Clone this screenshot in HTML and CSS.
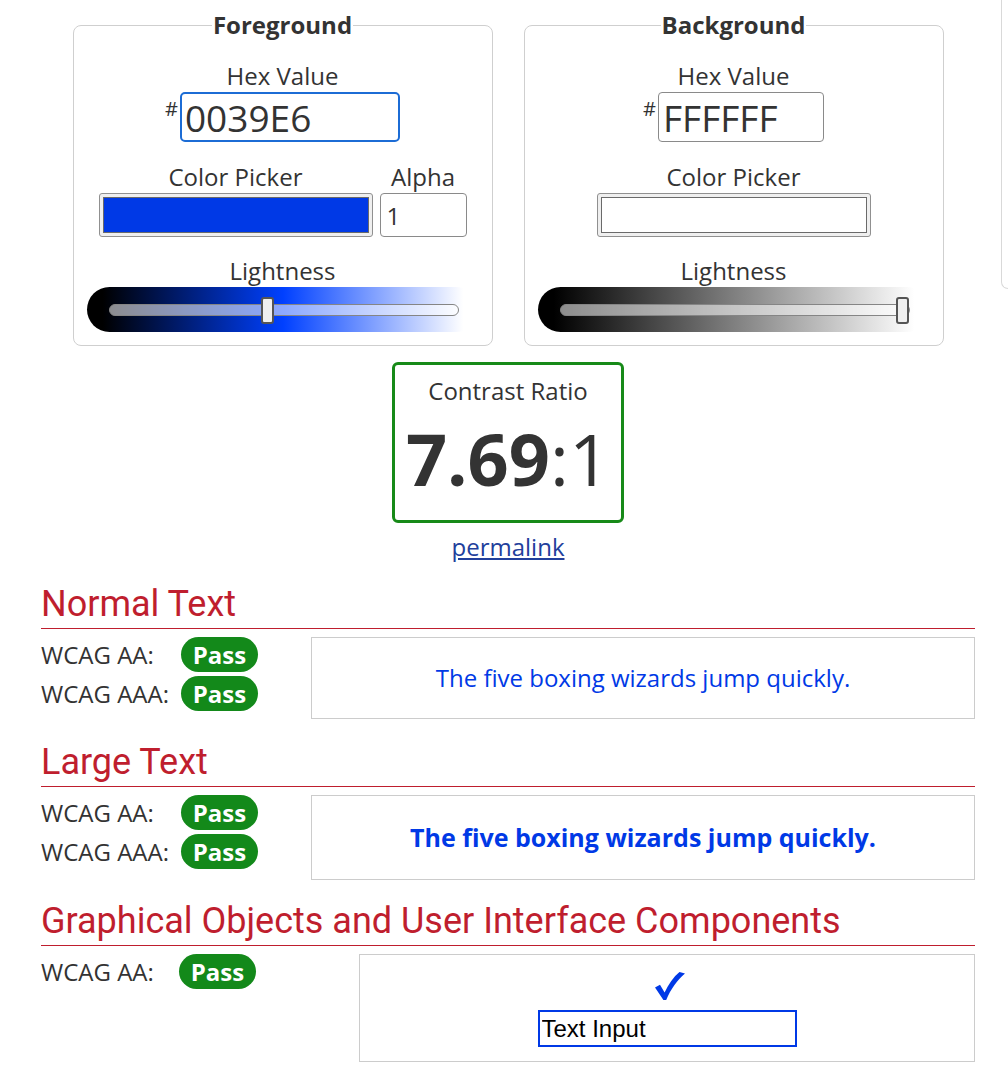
FILE: index.html
```html
<!DOCTYPE html>
<html lang="en">
<head>
<meta charset="utf-8">
<title>Contrast Checker</title>
<link rel="stylesheet" href="styles.css">
</head>
<body>
<main class="page">
  <div class="panels">
    <fieldset class="panel">
      <legend class="panel-title">Foreground</legend>
      <label class="field-label">Hex Value</label>
      <div class="hex-row">
        <span class="hash">#</span>
        <input class="hex-input hex-input--focus" type="text" value="0039E6">
      </div>
      <div class="picker-row">
        <div class="picker-col">
          <label class="field-label">Color Picker</label>
          <div class="swatch"><span class="swatch-fill swatch-fill--blue"></span></div>
        </div>
        <div class="picker-col">
          <label class="field-label">Alpha</label>
          <input class="alpha-input" type="text" value="1">
        </div>
      </div>
      <label class="field-label field-label--light">Lightness</label>
      <div class="slider slider--blue">
        <div class="track">
          <span class="thumb" style="left: calc((100% - 13px) * 0.451)"></span>
        </div>
      </div>
    </fieldset>
    <fieldset class="panel">
      <legend class="panel-title">Background</legend>
      <label class="field-label">Hex Value</label>
      <div class="hex-row">
        <span class="hash">#</span>
        <input class="hex-input" type="text" value="FFFFFF">
      </div>
      <div class="picker-row">
        <div class="picker-col">
          <label class="field-label">Color Picker</label>
          <div class="swatch"><span class="swatch-fill swatch-fill--white"></span></div>
        </div>
      </div>
      <label class="field-label field-label--light">Lightness</label>
      <div class="slider slider--gray">
        <div class="track">
          <span class="thumb" style="left: calc((100% - 13px) * 1)"></span>
        </div>
      </div>
    </fieldset>
  </div>

  <div class="ratio-box">
    <div class="ratio-label">Contrast Ratio</div>
    <div class="ratio-value"><b>7.69</b>:1</div>
  </div>
  <a class="permalink" href="#">permalink</a>

  <section class="result result--first">
    <h2 class="result-title">Normal Text</h2>
    <div class="result-body">
      <div class="checks">
        <span class="check-label">WCAG AA:</span><span class="badge">Pass</span>
        <span class="check-label">WCAG AAA:</span><span class="badge">Pass</span>
      </div>
      <div class="sample">The five boxing wizards jump quickly.</div>
    </div>
  </section>

  <section class="result">
    <h2 class="result-title">Large Text</h2>
    <div class="result-body">
      <div class="checks">
        <span class="check-label">WCAG AA:</span><span class="badge">Pass</span>
        <span class="check-label">WCAG AAA:</span><span class="badge">Pass</span>
      </div>
      <div class="sample sample--large">The five boxing wizards jump quickly.</div>
    </div>
  </section>

  <section class="result result--last">
    <h2 class="result-title">Graphical Objects and User Interface Components</h2>
    <div class="result-body result-body--ui">
      <div class="checks checks--ui">
        <span class="check-label">WCAG AA:</span><span class="badge">Pass</span>
      </div>
      <div class="sample sample--ui">
        <svg class="checkmark" viewBox="0 0 30 28" width="30" height="28" aria-hidden="true">
          <path d="M0,15.5 L5,12.8 L9.6,20.5 C13.5,12 18.5,5 24.5,0 L30,1.4 C22.5,7.8 15.8,16.8 11.2,28 L8.4,28 Z" fill="#0039E6"/>
        </svg>
        <input class="ui-input" type="text" value="Text Input">
      </div>
    </div>
  </section>
</main>
<aside class="side-edge"></aside>
</body>
</html>
```

FILE: styles.css
```css
html, body {
  margin: 0;
  padding: 0;
  background: #fff;
}

body {
  display: flex;
  align-items: flex-start;
  overflow: hidden;
  font-family: "Open Sans", "DejaVu Sans", sans-serif;
  color: #333;
}

.page {
  margin-left: 41px;
  width: 934px;
  flex-shrink: 0;
}

.side-edge {
  margin-left: 26px;
  width: 6px;
  height: 288px;
  flex-shrink: 0;
  border-left: 1px solid #d9d9d9;
  border-bottom: 1px solid #d9d9d9;
  border-bottom-left-radius: 8px;
}

/* ---------- panels ---------- */
.panels {
  display: flex;
  justify-content: center;
  gap: 31px;
  padding-top: 9px;
}

.panel {
  box-sizing: border-box;
  width: 420px;
  min-width: 0;
  margin: 0;
  padding: 19px 13px 13px;
  border: 1px solid #cfcfcf;
  border-radius: 8px;
}

.panel-title {
  margin: 0 auto;
  padding: 0 1px;
  font-size: 24px;
  line-height: 32px;
  font-weight: 700;
  color: #333;
}

.field-label {
  display: block;
  text-align: center;
  font-size: 24px;
  line-height: 32px;
  color: #333;
}

.field-label--light {
  margin-top: 18px;
}

.hex-row {
  display: flex;
  justify-content: center;
  align-items: flex-start;
}

.hash {
  font-size: 20px;
  line-height: 20px;
  margin-top: 7px;
  margin-right: 2px;
}

.hex-input {
  box-sizing: border-box;
  width: 166px;
  height: 50px;
  margin: 0;
  padding: 0 4px;
  border: 1px solid #8a8a8a;
  border-radius: 4px;
  font-family: "Open Sans", "DejaVu Sans", sans-serif;
  font-size: 37px;
  color: #333;
  background: #fff;
  outline: none;
}

.hex-input--focus {
  width: 220px;
  border: 2px solid #1c6cd5;
  border-radius: 5px;
  padding: 0 3px;
}

.picker-row {
  display: flex;
  justify-content: center;
  gap: 7px;
  margin-top: 19px;
}

.picker-col {
  display: flex;
  flex-direction: column;
  align-items: center;
}

.swatch {
  box-sizing: border-box;
  width: 274px;
  height: 44px;
  padding: 3px;
  border: 1px solid #909090;
  border-radius: 3px;
  background: #efefef;
  display: flex;
}

.swatch-fill {
  flex: 1;
  border: 1px solid #6a6a6a;
}

.swatch-fill--blue { background: #0039E6; }
.swatch-fill--white { background: #fff; }

.alpha-input {
  box-sizing: border-box;
  width: 87px;
  height: 44px;
  margin: 0;
  padding: 0 6px;
  border: 1px solid #8a8a8a;
  border-radius: 4px;
  font-family: "Open Sans", "DejaVu Sans", sans-serif;
  font-size: 24px;
  color: #333;
  background: #fff;
}

.slider {
  box-sizing: border-box;
  height: 45px;
  border-radius: 23px;
  padding: 0 20px 0 22px;
  display: flex;
  align-items: center;
}

.slider--blue {
  background: linear-gradient(90deg, #000 4%, #0040ff 50%, #fff 96%);
}

.slider--gray {
  background: linear-gradient(90deg, #000 4%, #fff 96%);
}

.track {
  position: relative;
  flex: 1;
  box-sizing: border-box;
  height: 12px;
  margin-top: 1px;
  border: 1px solid #858585;
  border-radius: 6px;
  background: rgba(255, 255, 255, 0.55);
}

.thumb {
  position: absolute;
  top: -8px;
  box-sizing: border-box;
  width: 13px;
  height: 27px;
  border: 2px solid #555;
  border-radius: 3px;
  background: #efefef;
}

/* ---------- ratio ---------- */
.ratio-box {
  width: fit-content;
  margin: 16px auto 0;
  padding: 10px 11px 11px;
  border: 3px solid #178a18;
  border-radius: 6px;
  text-align: center;
}

.ratio-label {
  font-size: 24px;
  line-height: 32px;
}

.ratio-value {
  font-size: 72px;
  line-height: 102px;
  font-weight: 400;
}

.ratio-value b {
  font-weight: 700;
}

.permalink {
  display: block;
  width: fit-content;
  margin: 8px auto 0;
  font-size: 24px;
  line-height: 32px;
  color: #22409c;
  text-decoration: underline;
}

/* ---------- results ---------- */
.result {
  margin-top: 22px;
}

.result--first {
  margin-top: 20px;
}

.result--last {
  margin-top: 20px;
}

.result-title {
  margin: 0;
  padding-bottom: 3px;
  border-bottom: 1px solid #bf1e2e;
  font-family: Roboto, "Liberation Sans", sans-serif;
  font-weight: 400;
  font-size: 36px;
  line-height: 42px;
  color: #bf1e2e;
}

.result-body {
  display: flex;
  align-items: flex-start;
  gap: 53px;
  margin-top: 8px;
}

.result-body--ui {
  gap: 103px;
}

.checks {
  display: grid;
  grid-template-columns: 140px 77px;
  row-gap: 4px;
  align-items: center;
}

.checks--ui {
  grid-template-columns: 138px 77px;
}

.check-label {
  font-size: 24px;
  line-height: 35px;
  color: #333;
}

.badge {
  height: 35px;
  border-radius: 18px;
  background: #13891a;
  color: #fff;
  font-weight: 700;
  font-size: 24px;
  line-height: 35px;
  text-align: center;
}

.sample {
  flex: 1;
  padding: 24px;
  border: 1px solid #cccccc;
  text-align: center;
  font-size: 24px;
  line-height: 32px;
  color: #0039E6;
}

.sample--large {
  padding: 24px 24px 25px;
  font-weight: 700;
  font-size: 25px;
  line-height: 34px;
}

.sample--ui {
  padding: 14px;
  display: flex;
  flex-direction: column;
  align-items: center;
}

.checkmark {
  display: block;
  margin: 3px 0 10px 6px;
}

.ui-input {
  box-sizing: border-box;
  width: 259px;
  height: 37px;
  margin: 0;
  padding: 0 2px;
  border: 2px solid #0039E6;
  font-family: "Liberation Sans", Arial, sans-serif;
  font-size: 24px;
  color: #000;
  background: #fff;
}
```
